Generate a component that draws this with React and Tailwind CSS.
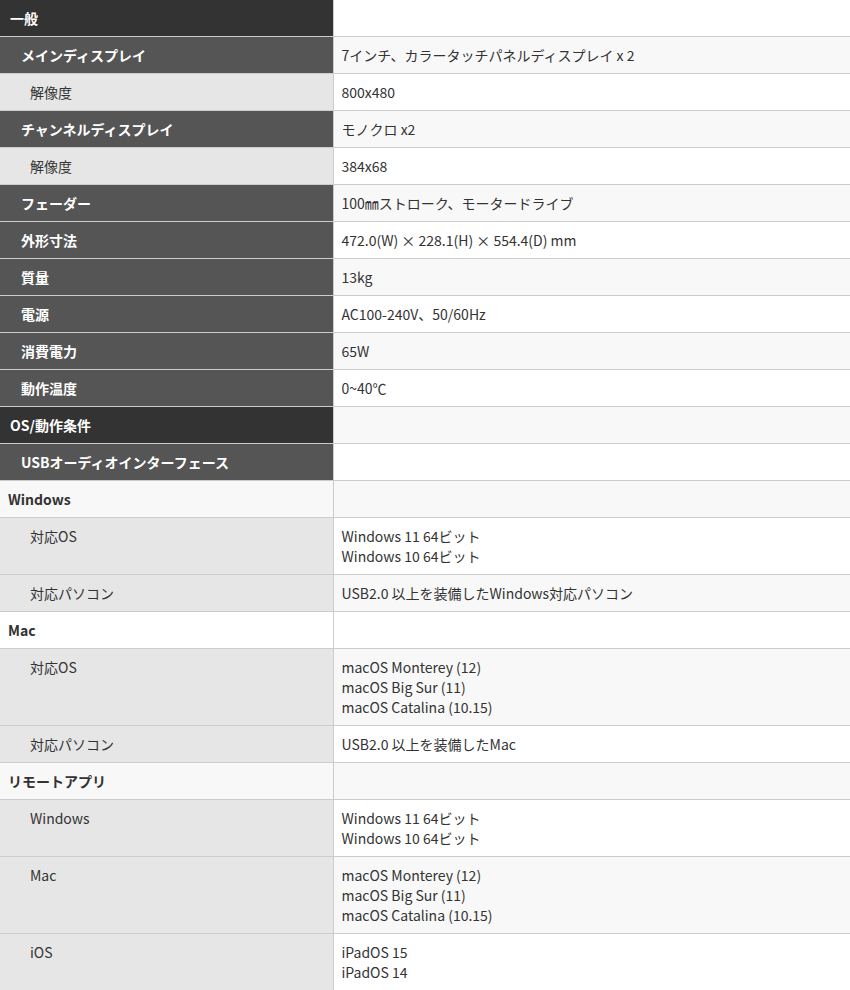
import React from 'react';

// kind: h1 = dark section, h2 = mid grey item, sub = light grey sub item, grp = plain bold group
const SPECS = [
  { kind: 'h1', label: '一般' },
  { kind: 'h2', label: 'メインディスプレイ', value: ['7インチ、カラータッチパネルディスプレイ x 2'] },
  { kind: 'sub', label: '解像度', value: ['800x480'] },
  { kind: 'h2', label: 'チャンネルディスプレイ', value: ['モノクロ x2'] },
  { kind: 'sub', label: '解像度', value: ['384x68'] },
  { kind: 'h2', label: 'フェーダー', value: ['100㎜ストローク、モータードライブ'] },
  { kind: 'h2', label: '外形寸法', value: ['472.0(W) × 228.1(H) × 554.4(D) mm'] },
  { kind: 'h2', label: '質量', value: ['13kg'] },
  { kind: 'h2', label: '電源', value: ['AC100-240V、50/60Hz'] },
  { kind: 'h2', label: '消費電力', value: ['65W'] },
  { kind: 'h2', label: '動作温度', value: ['0~40℃'] },
  { kind: 'h1', label: 'OS/動作条件' },
  { kind: 'h2', label: 'USBオーディオインターフェース' },
  { kind: 'grp', label: 'Windows' },
  { kind: 'sub', label: '対応OS', value: ['Windows 11 64ビット', 'Windows 10 64ビット'] },
  { kind: 'sub', label: '対応パソコン', value: ['USB2.0 以上を装備したWindows対応パソコン'] },
  { kind: 'grp', label: 'Mac' },
  { kind: 'sub', label: '対応OS', value: ['macOS Monterey (12)', 'macOS Big Sur (11)', 'macOS Catalina (10.15)'] },
  { kind: 'sub', label: '対応パソコン', value: ['USB2.0 以上を装備したMac'] },
  { kind: 'grp', label: 'リモートアプリ' },
  { kind: 'sub', label: 'Windows', value: ['Windows 11 64ビット', 'Windows 10 64ビット'] },
  { kind: 'sub', label: 'Mac', value: ['macOS Monterey (12)', 'macOS Big Sur (11)', 'macOS Catalina (10.15)'] },
  { kind: 'sub', label: 'iOS', value: ['iPadOS 15', 'iPadOS 14'] },
];

const labelStyles = {
  h1: 'bg-[#333333] text-white font-bold pl-[10px]',
  h2: 'bg-[#555555] text-white font-bold pl-[21px]',
  sub: 'bg-[#e6e6e6] text-[#333333] font-normal pl-[30px]',
  grp: 'text-[#333333] font-bold pl-[8px]',
};

export default function App() {
  return (
    <div className="w-[850px] bg-white font-['Noto_Sans_CJK_JP','Noto_Sans',sans-serif] text-[14px] leading-[20px] text-[#333333]">
      <table className="w-full border-collapse table-fixed">
        <colgroup>
          <col className="w-[333px]" />
          <col />
        </colgroup>
        <tbody>
          {SPECS.map((row, i) => (
            <tr key={i} className={i % 2 === 1 ? 'bg-[#f8f8f8]' : 'bg-white'}>
              <th
                className={`text-left align-top py-2 pr-2 border-b border-r border-[#cccccc] ${labelStyles[row.kind]}`}
              >
                {row.label}
              </th>
              <td className="align-top py-2 pl-[8px] pr-2 border-b border-[#cccccc]">
                {(row.value || []).map((line, j) => (
                  <div key={j}>{line}</div>
                ))}
              </td>
            </tr>
          ))}
        </tbody>
      </table>
    </div>
  );
}
